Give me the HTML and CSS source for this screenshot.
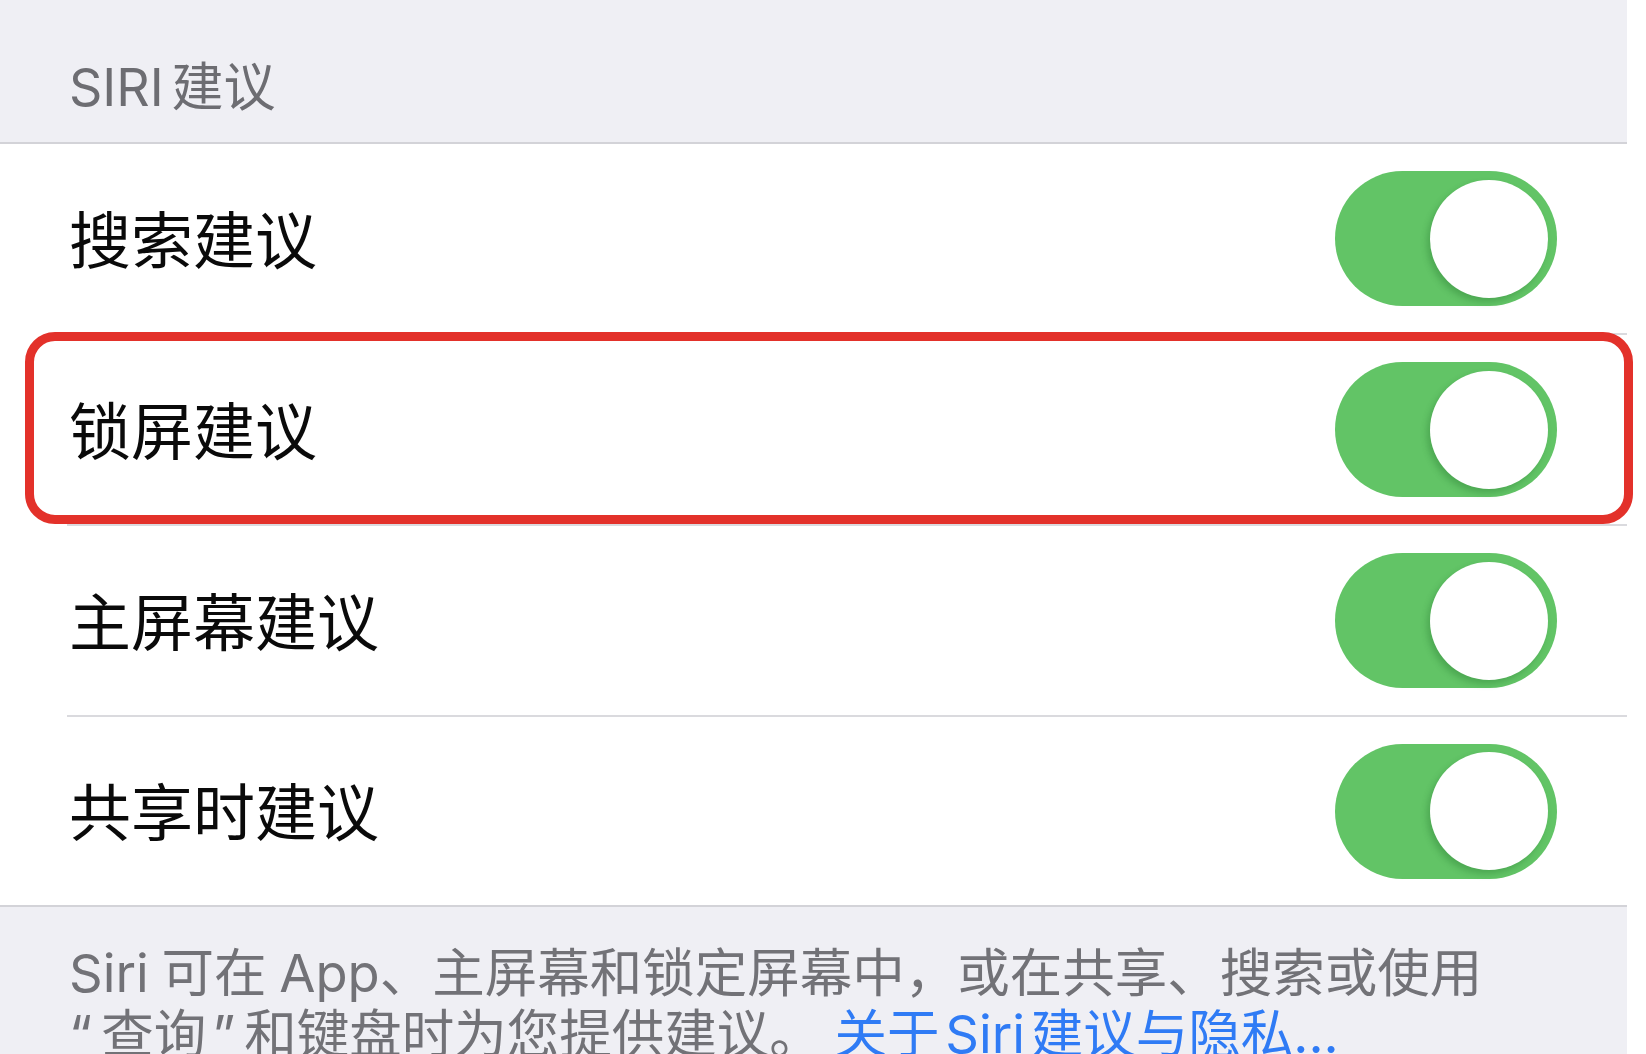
FILE: index.html
```html
<!DOCTYPE html>
<html lang="zh-CN">
<head>
<meta charset="utf-8">
<title>Siri 建议</title>
<link rel="stylesheet" href="styles.css">
</head>
<body>
<div class="screen">
  <div class="section-header">SIRI 建议</div>
  <div class="group">
    <div class="row">
      <div class="row-inner">
        <span class="label">搜索建议</span>
        <span class="toggle"><span class="knob"></span></span>
      </div>
    </div>
    <div class="row highlighted">
      <div class="row-inner">
        <span class="label">锁屏建议</span>
        <span class="toggle"><span class="knob"></span></span>
      </div>
      <div class="mark"></div>
    </div>
    <div class="row">
      <div class="row-inner">
        <span class="label">主屏幕建议</span>
        <span class="toggle"><span class="knob"></span></span>
      </div>
    </div>
    <div class="row last">
      <div class="row-inner">
        <span class="label">共享时建议</span>
        <span class="toggle"><span class="knob"></span></span>
      </div>
    </div>
  </div>
  <div class="section-footer">
    <p class="footnote">Siri 可在 App、主屏幕和锁定屏幕中，或在共享、搜索或使用<br><span class="quote-open">“</span>查询<span class="quote-close">”</span>和键盘时为您提供建议。 <span class="link">关于 Siri 建议与隐私...</span></p>
  </div>
</div>
</body>
</html>
```
FILE: styles.css
```css
html, body {
  margin: 0;
  padding: 0;
  background: #ffffff;
}
body {
  width: 1646px;
  height: 1054px;
  overflow: hidden;
  font-family: "Inter", "Noto Sans CJK SC", sans-serif;
}
.screen {
  width: 1627px;
  height: 1054px;
  background: #efeff4;
}
.section-header {
  box-sizing: border-box;
  height: 144px;
  padding: 58px 0 0 69px;
  font-size: 52px;
  line-height: 60px;
  word-spacing: -7px;
  color: #6d6d72;
  border-bottom: 2px solid #d3d3d8;
}
.group {
  background: #ffffff;
  border-bottom: 2px solid #d3d3d8;
}
.row {
  padding-left: 67px;
}
.row.highlighted {
  position: relative;
}
.row-inner {
  box-sizing: border-box;
  height: 191px;
  display: flex;
  align-items: center;
  justify-content: space-between;
  padding: 0 70px 0 2px;
  border-bottom: 2px solid #dadade;
}
.row.last .row-inner {
  border-bottom: none;
  height: 188px;
}
.label {
  font-family: "Noto Sans CJK SC", sans-serif;
  font-size: 62px;
  line-height: 70px;
  color: #0a0a0a;
  position: relative;
  top: -2px;
}
.toggle {
  box-sizing: border-box;
  width: 222px;
  height: 135px;
  border-radius: 68px;
  background: #62c466;
  display: flex;
  align-items: center;
  justify-content: flex-end;
  padding-right: 9px;
}
.knob {
  width: 118px;
  height: 118px;
  border-radius: 50%;
  background: #ffffff;
  box-shadow: -3px 4px 6px rgba(30, 110, 40, 0.32);
}
.mark {
  position: absolute;
  left: 25px;
  top: -3px;
  width: 1608px;
  height: 192px;
  box-sizing: border-box;
  border: 9px solid #e3312a;
  border-radius: 30px;
  pointer-events: none;
}
.section-footer {
  padding: 36px 0 0 69px;
}
.footnote {
  margin: 0;
  font-size: 52.5px;
  line-height: 61px;
  word-spacing: -2px;
  color: #727277;
  white-space: nowrap;
}
.quote-open {
  margin-right: 9px;
}
.quote-close {
  margin: 0 9px 0 6px;
}
.link {
  color: #2f7bf5;
  word-spacing: -9px;
}
```
